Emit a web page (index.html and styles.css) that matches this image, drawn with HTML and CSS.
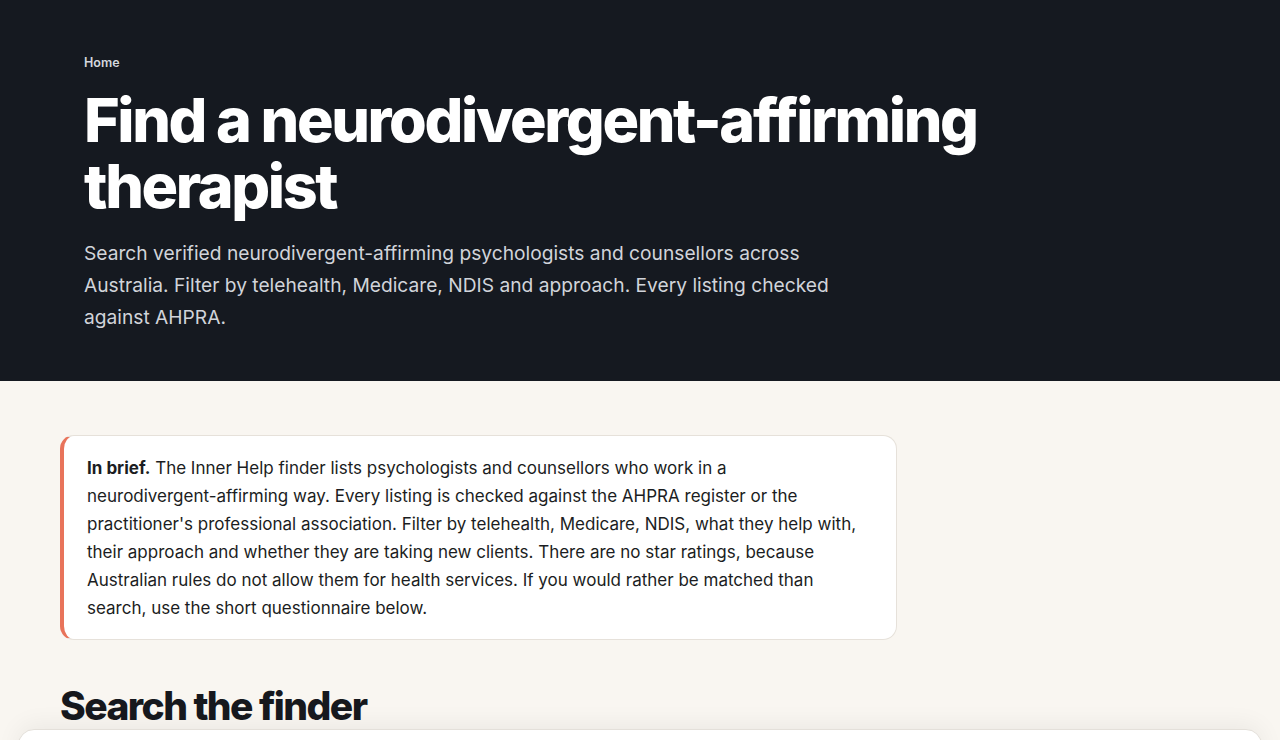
FILE: index.html
```html
<!DOCTYPE html>
<html lang="en">
<head>
<meta charset="utf-8">
<title>Find a neurodivergent-affirming therapist</title>
<link rel="stylesheet" href="styles.css">
</head>
<body>
<header class="hero">
  <div class="hero-inner">
    <nav class="crumbs"><a href="#">Home</a></nav>
    <h1 class="hero-title">Find a neurodivergent-affirming therapist</h1>
    <p class="hero-lead">Search verified neurodivergent-affirming psychologists and counsellors across Australia. Filter by telehealth, Medicare, NDIS and approach. Every listing checked against AHPRA.</p>
  </div>
</header>
<main class="main">
  <div class="main-inner">
    <aside class="brief">
      <p><strong>In brief.</strong> The Inner Help finder lists psychologists and counsellors who work in a <span class="nowrap">neurodivergent-affirming</span> way. Every listing is checked against the AHPRA register or the practitioner's professional association. Filter by telehealth, Medicare, NDIS, what they help with, their approach and whether they are taking new clients. There are no star ratings, because Australian rules do not allow them for health services. If you would rather be matched than search, use the short questionnaire below.</p>
    </aside>
    <h2 class="section-title">Search the finder</h2>
  </div>
  <section class="finder-card"></section>
</main>
</body>
</html>
```

FILE: styles.css
```css
* { box-sizing: border-box; }
html, body { margin: 0; padding: 0; }
body {
  font-family: Inter, "Noto Sans", sans-serif;
  background: #f9f6f1;
  color: #16181d;
}
.hero {
  background: #151920;
  color: #fff;
  height: 381px;
}
.hero-inner {
  padding: 51px 84px 0;
}
.crumbs a {
  font-size: 12.5px;
  font-weight: 600;
  color: #d4d7de;
  text-decoration: none;
  line-height: 16px;
  display: inline-block;
}
.hero-title {
  margin: 16px 0 0;
  font-size: 61px;
  line-height: 66px;
  font-weight: 800;
  letter-spacing: -0.039em;
  max-width: 960px;
}
.hero-lead {
  margin: 18px 0 0;
  font-size: 19.2px;
  line-height: 32px;
  color: #d1d4da;
  max-width: 770px;
}
.main-inner {
  padding: 54px 60px 0;
}
.brief {
  width: 837px;
  background: #fff;
  border: 1px solid #e6e1da;
  border-left: 4px solid #e8735a;
  border-radius: 14px;
  padding: 18px 24px 17px 23px;
}
.brief p {
  margin: 0;
  max-width: 780px;
  font-size: 17px;
  line-height: 28px;
  color: #1b1d22;
}
.brief strong { font-weight: 700; }
.nowrap { white-space: nowrap; }
.section-title {
  margin: 44px 0 0;
  font-size: 39px;
  line-height: 44px;
  font-weight: 800;
  letter-spacing: -0.04em;
  color: #16181d;
}
.finder-card {
  margin: 1px 18px 0;
  height: 200px;
  background: #fff;
  border-radius: 16px;
  border: 1px solid #e4e0da;
  box-shadow: 0 -4px 24px rgba(0,0,0,0.06);
}
```
